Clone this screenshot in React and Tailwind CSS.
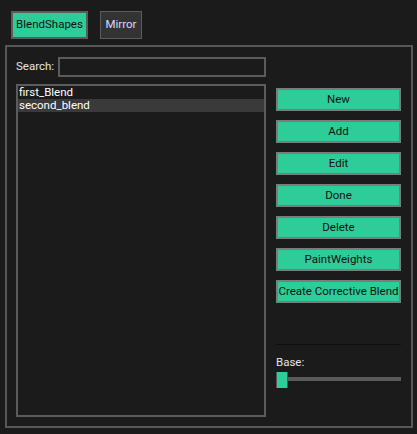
import React, { useState } from "react";

const actions = ["New", "Add", "Edit", "Done", "Delete", "PaintWeights", "Create Corrective Blend"];
const blends = ["first_Blend", "second_blend"];

const ActionButton = ({ label }) => (
  <button className="h-[23px] w-full whitespace-nowrap border-2 border-[#7c7c7c] bg-[#2ecc98] text-[11.5px] leading-none text-[#111]">
    {label}
  </button>
);

export default function App() {
  const [selected, setSelected] = useState(1);
  const [search, setSearch] = useState("");

  return (
    <div
      className="h-[434px] w-[417px] overflow-hidden bg-[#1b1b1b] text-[11.5px] text-[#e6e6e6]"
      style={{ fontFamily: 'Roboto, "Liberation Sans", sans-serif' }}
    >
      {/* tabs */}
      <div className="flex items-start pl-[11px] pt-[11px]">
        <button className="h-[28px] w-[77px] border-2 border-[#5c5c5c] bg-[#2ecc98] text-[#111]">
          BlendShapes
        </button>
        <button className="ml-[12px] h-[28px] w-[42px] border border-[#5c5c5c] bg-[#333333] text-[#d4dcff]">
          Mirror
        </button>
      </div>

      {/* panel */}
      <div className="ml-[5px] mt-[6px] flex h-[383px] w-[408px] border-2 border-[#575757] pb-[9px] pl-[9px] pr-[10px] pt-[10px]">
        <div className="flex w-[250px] flex-col">
          <div className="flex h-[20px] items-center">
            <span className="w-[42px]">Search:</span>
            <input
              value={search}
              onChange={(e) => setSearch(e.target.value)}
              className="h-[20px] flex-1 border-2 border-[#5c5c5c] bg-[#1b1b1b] px-1 text-[11.5px] text-white outline-none"
            />
          </div>
          <div className="mt-[7px] flex-1 border-2 border-[#5c5c5c] bg-[#1b1b1b]">
            {blends
              .filter((b) => b.toLowerCase().includes(search.toLowerCase()))
              .map((b, i) => (
                <div
                  key={b}
                  onClick={() => setSelected(i)}
                  className={`h-[13px] pl-[1px] leading-[13px] text-white ${selected === i ? "bg-[#3a3a3a]" : ""}`}
                >
                  {b}
                </div>
              ))}
          </div>
        </div>

        <div className="ml-[10px] flex w-[125px] flex-col pt-[31px]">
          <div className="flex flex-col gap-[9px]">
            {actions.map((a) => (
              <ActionButton key={a} label={a} />
            ))}
          </div>
          <div className="mt-[41px] h-px bg-[#0e0e0e]" />
          <div className="mt-[9px] h-[16px] leading-[16px] text-[#e6e6e6]">Base:</div>
          <div className="relative mt-[2px] h-[16px]">
            <div className="absolute left-0 right-0 top-[5px] h-[4px] bg-[#5a5a5a]" />
            <div className="absolute left-0 top-0 h-[16px] w-[12px] border-x border-[#555] bg-[#2ecc98]" />
          </div>
        </div>
      </div>
    </div>
  );
}
